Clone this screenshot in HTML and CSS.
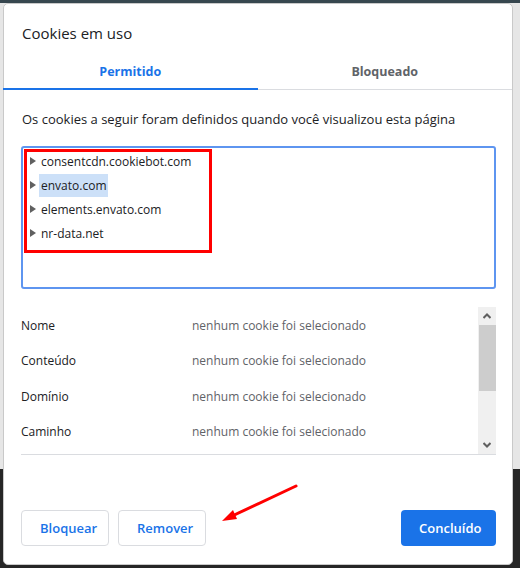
FILE: index.html
```html
<!DOCTYPE html>
<html lang="pt-BR">
<head>
    <meta charset="UTF-8">
    <meta name="viewport" content="width=device-width, initial-scale=1.0">
    <title>Cookies em uso</title>
    <link rel="stylesheet" href="styles.css">
</head>
<body>
    <div class="backdrop">
        <div class="backdrop-page"></div>
    </div>

    <div class="dialog">
        <h1 class="dialog-title">Cookies em uso</h1>

        <div class="tabs">
            <div class="tab active">Permitido</div>
            <div class="tab">Bloqueado</div>
        </div>

        <p class="description">Os cookies a seguir foram definidos quando você visualizou esta página</p>

        <div class="tree">
            <div class="tree-item"><span class="arrow"></span><span class="label">consentcdn.cookiebot.com</span></div>
            <div class="tree-item"><span class="arrow"></span><span class="label selected">envato.com</span></div>
            <div class="tree-item"><span class="arrow"></span><span class="label">elements.envato.com</span></div>
            <div class="tree-item"><span class="arrow"></span><span class="label">nr-data.net</span></div>
            <div class="highlight-box"></div>
        </div>

        <div class="details">
            <div class="details-list">
                <div class="detail-row"><span class="detail-key">Nome</span><span class="detail-value">nenhum cookie foi selecionado</span></div>
                <div class="detail-row"><span class="detail-key">Conteúdo</span><span class="detail-value">nenhum cookie foi selecionado</span></div>
                <div class="detail-row"><span class="detail-key">Domínio</span><span class="detail-value">nenhum cookie foi selecionado</span></div>
                <div class="detail-row"><span class="detail-key">Caminho</span><span class="detail-value">nenhum cookie foi selecionado</span></div>
            </div>
            <div class="scrollbar">
                <svg class="scroll-arrow" width="8" height="6" viewBox="0 0 8 6"><path d="M0.5 5 L4 1.5 L7.5 5" fill="none" stroke="#606060" stroke-width="2"/></svg>
                <div class="scroll-thumb"></div>
                <div class="scroll-track"></div>
                <svg class="scroll-arrow" width="8" height="6" viewBox="0 0 8 6"><path d="M0.5 1 L4 4.5 L7.5 1" fill="none" stroke="#606060" stroke-width="2"/></svg>
            </div>
        </div>

        <div class="actions">
            <button class="button outline">Bloquear</button>
            <button class="button outline">Remover</button>
            <button class="button primary">Concluído</button>
        </div>

        <svg class="annotation-arrow" width="90" height="50" viewBox="0 0 90 50">
            <line x1="82" y1="4" x2="16" y2="35" stroke="#f00" stroke-width="3" stroke-linecap="round"/>
            <polygon points="8,39 19,28 23,37" fill="#f00"/>
        </svg>
    </div>
</body>
</html>
```

FILE: styles.css
```css
* {
    box-sizing: border-box;
}
body {
    margin: 0;
    font-family: "Open Sans", "Noto Sans", Arial, sans-serif;
    background-color: #262626;
    color: #202124;
}
.backdrop {
    position: fixed;
    inset: 0;
    z-index: 0;
}
.backdrop-page {
    height: 469px;
    background-color: #e6e6e6;
    border-top: 3px solid #37474f;
}
.dialog {
    position: relative;
    z-index: 1;
    margin: 3px 7px 0 3px;
    height: 562px;
    background-color: white;
    border: 1px solid #c9c9c9;
    border-radius: 5px;
    display: flex;
    flex-direction: column;
}
.dialog-title {
    margin: 0;
    padding: 17px 0 0 18px;
    height: 53px;
    font-size: 15px;
    font-weight: normal;
    line-height: 24px;
}
.tabs {
    display: flex;
    height: 33px;
    margin-left: -1px;
    border-bottom: 1px solid #dadce0;
}
.tab {
    flex: 1;
    text-align: center;
    font-size: 12.5px;
    font-weight: bold;
    color: #5f6368;
    line-height: 30px;
}
.tab.active {
    color: #1a73e8;
    border-bottom: 2px solid #1a73e8;
    margin-bottom: -1px;
}
.description {
    margin: 20px 0 0 18px;
    font-size: 13px;
    line-height: 18px;
    color: #202124;
}
.tree {
    position: relative;
    margin: 18px 16px 0 17px;
    height: 143px;
    border: 2px solid #5e95f0;
    border-radius: 3px;
    padding: 1px 0 0 7px;
}
.tree-item {
    display: flex;
    align-items: center;
    height: 24px;
    font-size: 12px;
}
.arrow {
    width: 0;
    height: 0;
    border-top: 4px solid transparent;
    border-bottom: 4px solid transparent;
    border-left: 6px solid #606060;
    margin-right: 3px;
}
.label {
    padding: 0 2px;
    line-height: 23px;
}
.label.selected {
    background-color: #cce0f8;
}
.highlight-box {
    position: absolute;
    left: 1px;
    top: 1px;
    width: 188px;
    height: 104px;
    border: 3px solid #f00;
}
.details {
    display: flex;
    margin: 18px 16px 0 17px;
    height: 148px;
    border-bottom: 1px solid #dadce0;
}
.details-list {
    flex: 1;
    padding-top: 1px;
}
.detail-row {
    display: flex;
    height: 35.3px;
    align-items: center;
    font-size: 12px;
}
.detail-key {
    width: 171px;
    color: #202124;
}
.detail-value {
    color: #5f6368;
}
.scrollbar {
    width: 18px;
    background-color: #f0f0f0;
    display: flex;
    flex-direction: column;
    align-items: center;
}
.scroll-arrow {
    margin: 6px 0;
}
.scroll-thumb {
    width: 17px;
    height: 66px;
    background-color: #cdcdcd;
}
.scroll-track {
    flex: 1;
}
.actions {
    display: flex;
    gap: 9px;
    margin: 55px 16px 0 17px;
}
.button {
    height: 36px;
    padding: 0 18px;
    border-radius: 4px;
    font-family: inherit;
    font-size: 13px;
    font-weight: 600;
    cursor: pointer;
}
.button.outline {
    width: 88px;
    background-color: white;
    color: #1a73e8;
    border: 1px solid #dadce0;
}
.button.primary {
    margin-left: auto;
    width: 95px;
    background-color: #1a73e8;
    color: white;
    border: none;
}
.annotation-arrow {
    position: absolute;
    left: 210px;
    top: 478px;
}
```
